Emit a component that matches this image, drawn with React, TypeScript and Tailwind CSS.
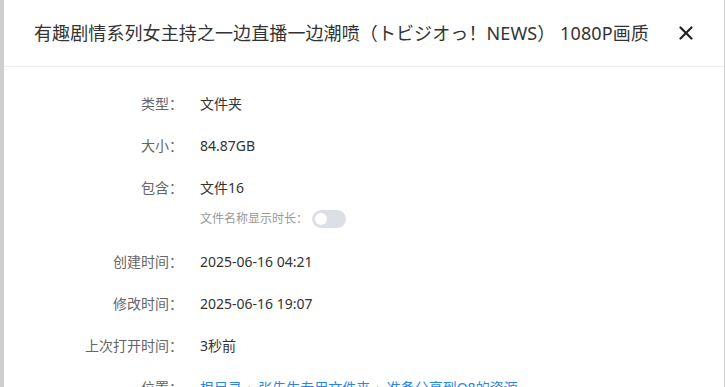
import React, { useState } from 'react';

interface InfoRow {
  label: string;
  value: string;
}

const ROWS_TOP: InfoRow[] = [
  { label: '类型：', value: '文件夹' },
  { label: '大小：', value: '84.87GB' },
];

const ROWS_BOTTOM: InfoRow[] = [
  { label: '创建时间：', value: '2025-06-16 04:21' },
  { label: '修改时间：', value: '2025-06-16 19:07' },
  { label: '上次打开时间：', value: '3秒前' },
];

const PATH = ['根目录', '张先生专用文件夹', '准备分享到Q8的资源'];

const Row = ({ label, children }: { label: string; children: React.ReactNode }) => (
  <div className="flex h-[42px] items-center">
    <div className="w-[179px] text-right text-[14px] text-[#666]">{label}</div>
    <div className="ml-[17px] text-[14px] text-[#333]">{children}</div>
  </div>
);

const App = () => {
  const [showDuration, setShowDuration] = useState(false);
  return (
    <div
      className="flex h-[387px] w-[725px] overflow-hidden bg-[#cfcfcf]"
      style={{ fontFamily: '"Noto Sans", "Noto Sans CJK SC", sans-serif' }}
    >
      <div className="ml-[4px] flex h-full w-[720px] flex-col bg-white">
        <header className="flex h-[67px] shrink-0 items-center justify-between border-b border-[#ebeef5] pl-[30px] pr-[28px]">
          <h1 className="text-[18px] font-normal tracking-[0.1px] text-[#333]">
            有趣剧情系列女主持之一边直播一边潮喷（トビジオっ！NEWS） 1080P画质
          </h1>
          <button className="flex h-[20px] w-[20px] items-center justify-center text-[#222]">
            <svg width="14" height="14" viewBox="0 0 14 14" fill="none">
              <path d="M1.5 1.5L12.5 12.5M12.5 1.5L1.5 12.5" stroke="currentColor" strokeWidth="2.2" strokeLinecap="round" />
            </svg>
          </button>
        </header>
        <section className="flex flex-col pt-[15px]">
          {ROWS_TOP.map(r => (
            <Row key={r.label} label={r.label}>
              {r.value}
            </Row>
          ))}
          <Row label="包含：">文件16</Row>
          <div className="flex h-[22px] items-center">
            <div className="ml-[196px] text-[12px] text-[#999]">文件名称显示时长：</div>
            <button
              onClick={() => setShowDuration(!showDuration)}
              className={`relative ml-[4px] h-[18px] w-[34px] rounded-full ${showDuration ? 'bg-[#2d8cf0]' : 'bg-[#dcdfe6]'}`}
            >
              <span
                className={`absolute top-[3px] h-[12px] w-[12px] rounded-full bg-white ${showDuration ? 'left-[19px]' : 'left-[3px]'}`}
              />
            </button>
          </div>
          <div className="h-[10px]" />
          {ROWS_BOTTOM.map(r => (
            <Row key={r.label} label={r.label}>
              {r.value}
            </Row>
          ))}
          <Row label="位置：">
            <span className="flex items-center gap-x-[6px]">
              {PATH.map((p, i) => (
                <React.Fragment key={p}>
                  {i > 0 && <span className="text-[#999]">›</span>}
                  <a className="cursor-pointer text-[#2b85e4]">{p}</a>
                </React.Fragment>
              ))}
            </span>
          </Row>
        </section>
      </div>
    </div>
  );
};

export default App;
